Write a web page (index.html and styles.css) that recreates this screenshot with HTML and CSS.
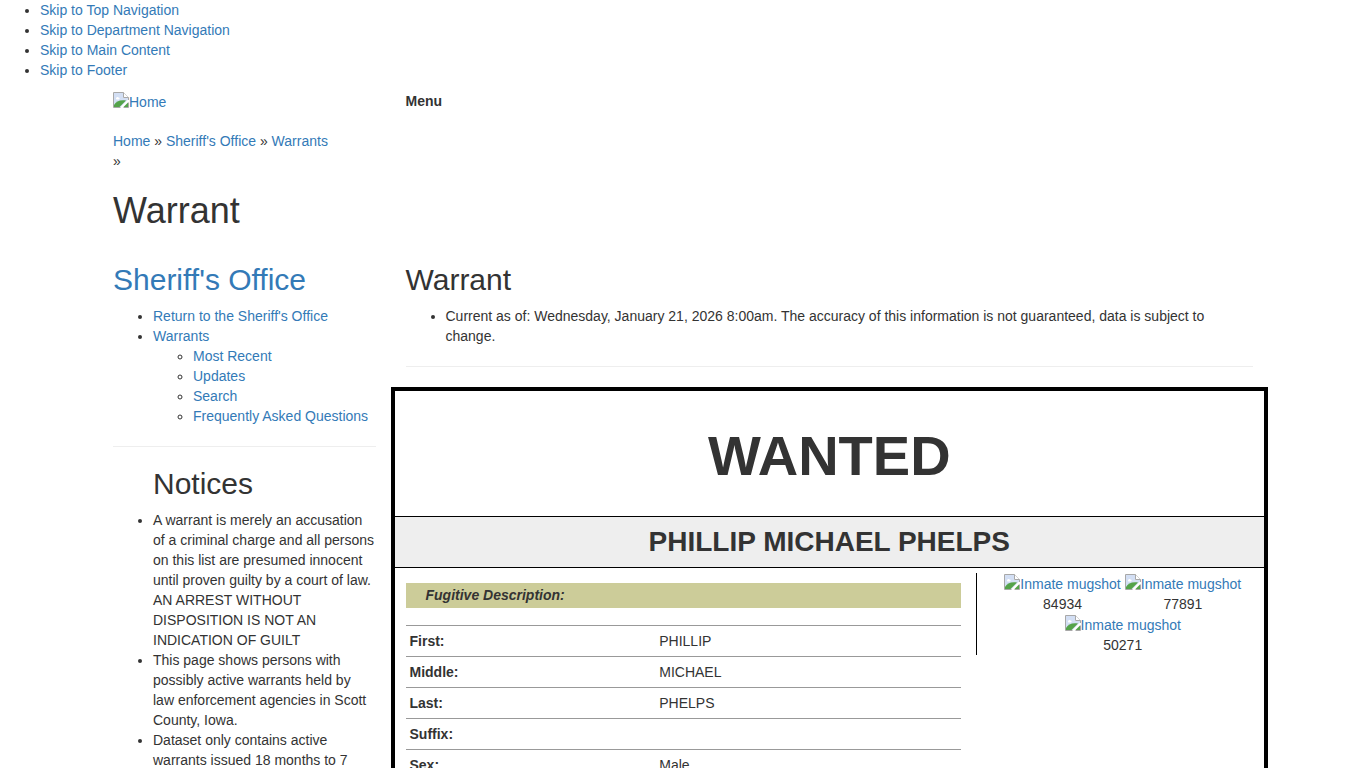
FILE: index.html
```html
<!DOCTYPE html>
<html lang="en">
<head>
<meta charset="utf-8">
<meta name="viewport" content="width=device-width, initial-scale=1">
<title>Warrant</title>
<link rel="stylesheet" href="styles.css">
</head>
<body>
<svg class="defs" aria-hidden="true">
  <symbol id="missing" viewBox="0 0 16 16">
    <path d="M.5.5h10L15.500 5v10.500H.5z" fill="#fff"/>
    <path d="M1 1h9v5h5v1.500L7.500 15H1z" fill="#d3dff4"/>
    <path d="M3 6.500C3 5 5 4.500 5.500 5.500c1.500 0 1.500 2 0 2H4c-.7 0-1-.4-1-1z" fill="#fff"/>
    <path d="M1 15v-2C3 9.500 7 7.500 13 8.500L6.500 15z" fill="#54a34a"/>
    <path d="M15 10.500V15h-4.500z" fill="#54a34a"/>
    <path d="M7.500 15.500h-7V.5h10l5 5V8M15.500 10.500v5h-5" fill="none" stroke="#a8a8a8"/>
    <path d="M10.500.5v5h5" fill="#fff" stroke="#a8a8a8"/>
  </symbol>
</svg>

<ul class="skip-links">
  <li><a href="#menu">Skip to Top Navigation</a></li>
  <li><a href="#department">Skip to Department Navigation</a></li>
  <li><a href="#main">Skip to Main Content</a></li>
  <li><a href="#footer">Skip to Footer</a></li>
</ul>

<div class="container">
  <header class="row">
    <div class="col"><a href="#home" class="image-link"><svg class="missing-image" aria-hidden="true"><use href="#missing"/></svg>Home</a></div>
    <nav class="col" id="menu"><strong>Menu</strong></nav>
  </header>

  <nav class="breadcrumb" aria-label="Breadcrumb">
    <a href="#home">Home</a> » <a href="#office">Sheriff's Office</a> » <a href="#warrants">Warrants</a><br>»
  </nav>
  <h1 class="page-title">Warrant</h1>

  <div class="row">
    <aside class="col" id="department">
      <h2><a href="#office">Sheriff's Office</a></h2>
      <ul>
        <li><a href="#office">Return to the Sheriff's Office</a></li>
        <li><a href="#warrants">Warrants</a>
          <ul>
            <li><a href="#recent">Most Recent</a></li>
            <li><a href="#updates">Updates</a></li>
            <li><a href="#search">Search</a></li>
            <li><a href="#faq">Frequently Asked Questions</a></li>
          </ul>
        </li>
      </ul>
      <hr>
      <h2 class="notices-title">Notices</h2>
      <ul>
        <li>A warrant is merely an accusation of a criminal charge and all persons on this list are presumed innocent until proven guilty by a court of law. AN ARREST WITHOUT DISPOSITION IS NOT AN INDICATION OF GUILT</li>
        <li>This page shows persons with possibly active warrants held by law enforcement agencies in Scott County, Iowa.</li>
        <li>Dataset only contains active warrants issued 18 months to 7</li>
      </ul>
    </aside>

    <main class="col" id="main">
      <h2>Warrant</h2>
      <ul>
        <li>Current as of: Wednesday, January 21, 2026 8:00am. The accuracy of this information is not guaranteed, data is subject to change.</li>
      </ul>
      <hr>
      <section class="poster">
        <h2 class="poster-title">WANTED</h2>
        <h3 class="poster-name">PHILLIP MICHAEL PHELPS</h3>
        <div class="poster-body">
          <div class="details">
            <h4 class="details-title">Fugitive Description:</h4>
            <table class="details-table">
              <tr><th scope="row">First:</th><td>PHILLIP</td></tr>
              <tr><th scope="row">Middle:</th><td>MICHAEL</td></tr>
              <tr><th scope="row">Last:</th><td>PHELPS</td></tr>
              <tr><th scope="row">Suffix:</th><td></td></tr>
              <tr><th scope="row">Sex:</th><td>Male</td></tr>
            </table>
          </div>
          <div class="mugshots">
            <figure><a href="#84934" class="image-link"><svg class="missing-image" aria-hidden="true"><use href="#missing"/></svg>Inmate mugshot</a><figcaption>84934</figcaption></figure>
            <figure><a href="#77891" class="image-link"><svg class="missing-image" aria-hidden="true"><use href="#missing"/></svg>Inmate mugshot</a><figcaption>77891</figcaption></figure>
            <figure><a href="#50271" class="image-link"><svg class="missing-image" aria-hidden="true"><use href="#missing"/></svg>Inmate mugshot</a><figcaption>50271</figcaption></figure>
          </div>
        </div>
      </section>
    </main>
  </div>
</div>
</body>
</html>
```
FILE: styles.css
```css
* {
  box-sizing: border-box;
}

body {
  margin: 0;
  font: 14px/20px "Liberation Sans", Arial, sans-serif;
  color: #333;
  background: #fff;
}

a {
  color: #337ab7;
  text-decoration: none;
}

ul {
  margin: 0 0 10px;
  padding-left: 40px;
}

ul ul {
  margin-bottom: 0;
}

h1,
h2,
h3,
h4 {
  margin: 0;
}

h2 {
  margin-bottom: 10px;
  font-size: 30px;
  font-weight: 500;
  line-height: 33px;
}

hr {
  margin: 20px 0;
  border: 0;
  border-top: 1px solid #eee;
}

.defs {
  display: none;
}

.container {
  max-width: 1170px;
  margin: 0 auto;
}

.row {
  display: grid;
  grid-template-columns: 1fr 3fr;
}

.col {
  min-width: 0;
  padding: 0 15px;
}

header.row {
  padding-top: 1px;
}

.image-link {
  display: flex;
  align-items: flex-start;
  height: 21px;
  line-height: 22px;
}

.missing-image {
  flex: none;
  width: 16px;
  height: 16px;
  margin-top: 1px;
}

.breadcrumb {
  padding: 19px 15px 20px;
}

.page-title {
  padding: 0 15px;
  margin-bottom: 32px;
  font-size: 36px;
  font-weight: 500;
  line-height: 40px;
}

.notices-title {
  padding-left: 40px;
}

.poster {
  margin: 0 -15px;
  border: 4px solid #000;
}

.poster-title {
  margin: 0;
  padding: 34px 0 29px;
  font-size: 56px;
  font-weight: 700;
  line-height: 62px;
  text-align: center;
}

.poster-name {
  padding: 9px 0 10px;
  border: solid #000;
  border-width: 1px 0;
  background: #eee;
  font-size: 28px;
  line-height: 31px;
  text-align: center;
}

.poster-body {
  display: grid;
  grid-template-columns: 2fr 1fr;
  align-items: start;
  margin: 0 -4px;
  padding: 5px 0 20px;
}

.details {
  padding: 10px 15px 0;
}

.details-title {
  margin-bottom: 17px;
  padding: 2px 20px 3px;
  background: #cc9;
  font-size: 14px;
  font-style: italic;
  line-height: 20px;
}

.details-table {
  width: 100%;
  border-collapse: collapse;
}

.details-table th,
.details-table td {
  padding: 5px 4px;
  border-top: 1px solid #999;
  text-align: left;
}

.details-table th {
  width: 45%;
}

.mugshots {
  display: flex;
  flex-wrap: wrap;
  justify-content: center;
  column-gap: 4px;
  padding: 0 14px 0 15px;
  border-left: 1px solid #000;
}

.mugshots figure {
  margin: 0;
  text-align: center;
}
```
